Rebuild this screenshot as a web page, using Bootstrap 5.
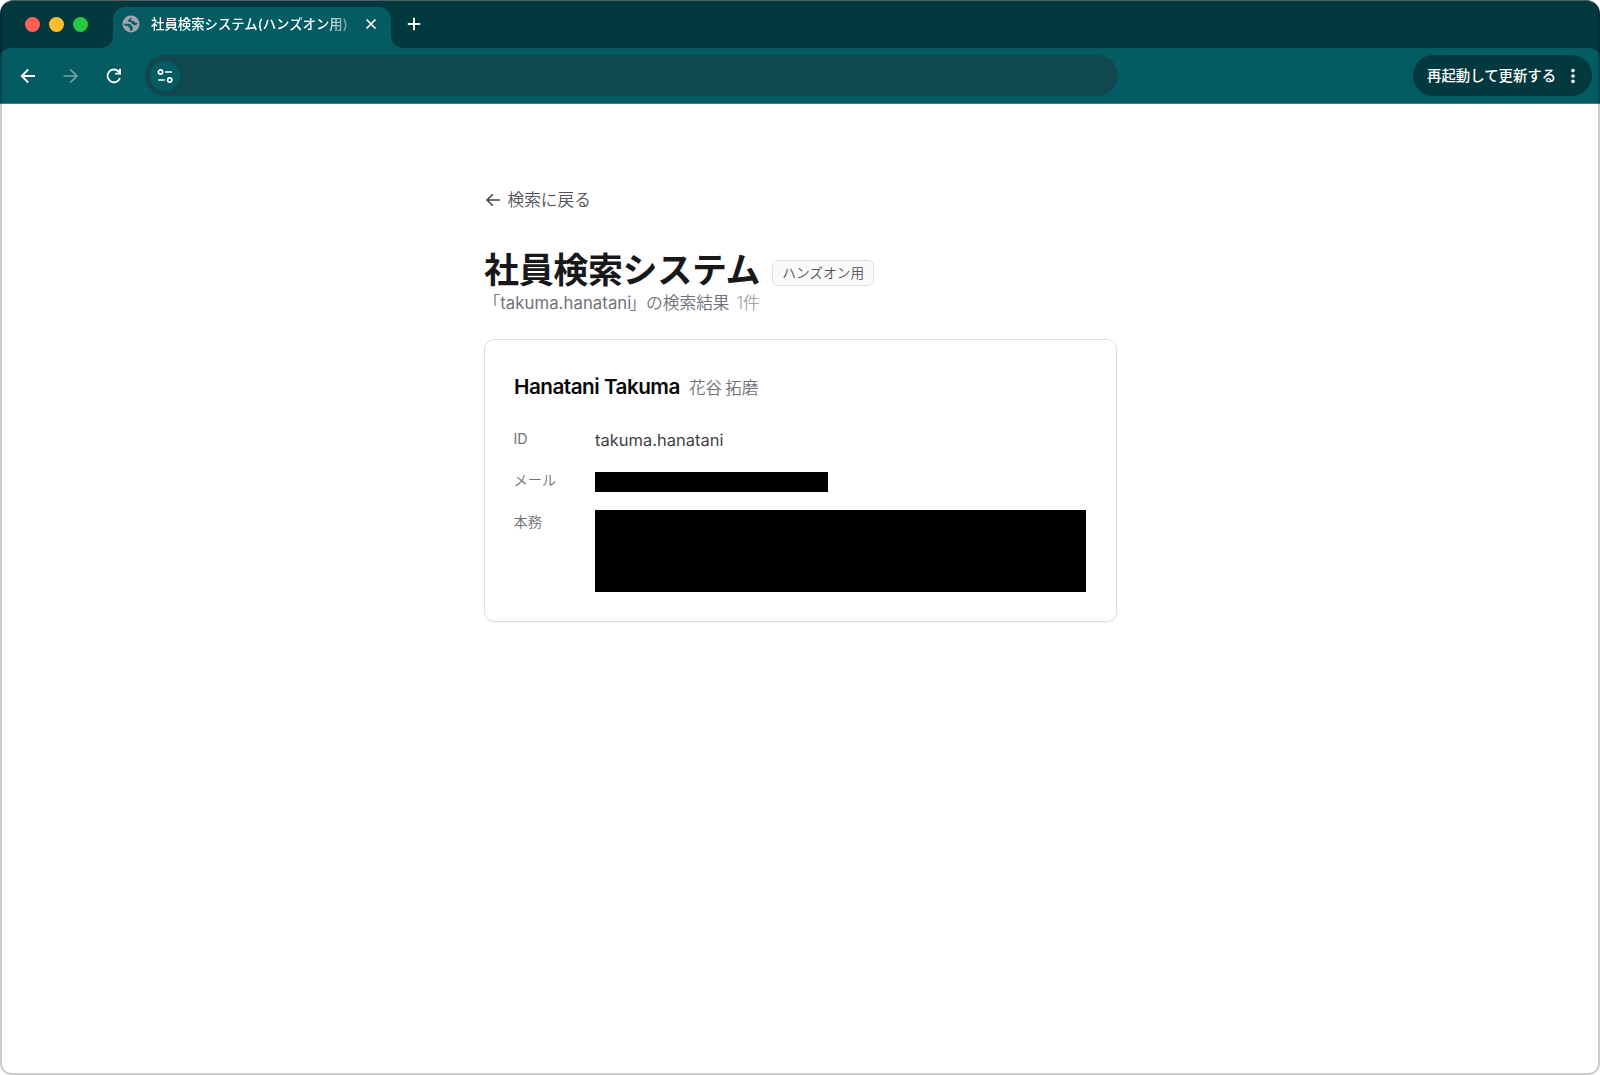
<!DOCTYPE html>
<html lang="ja">
<head>
<meta charset="utf-8">
<meta name="viewport" content="width=device-width, initial-scale=1">
<title>社員検索システム(ハンズオン用)</title>
<link href="https://cdn.jsdelivr.net/npm/bootstrap@5.3.0/dist/css/bootstrap.min.css" rel="stylesheet">
<style>
body{font-family:Inter,"Noto Sans CJK JP",sans-serif;background:#fff;overflow:hidden}
svg{display:block;flex:none}
.win{width:1600px;height:1075px;border-radius:14px 14px 11px 11px;background:#fff}
.win::after{content:"";position:absolute;inset:0;border:2px solid rgba(0,0,0,.2);border-top:1px solid rgba(110,110,110,.75);border-radius:inherit;pointer-events:none}
.strip{height:48px;background:#02393e;padding:7px 0 0 24.5px}
.lights{gap:9px;width:88px;height:34px}
.dot{width:15px;height:15px;border-radius:50%}
.dot-r{background:#ff5f57}.dot-y{background:#febc2e}.dot-g{background:#28c840}
.tab-active{width:278.5px;height:41px;background:#045b61;border-radius:12px 12px 0 0;padding:0 12px 8px 9.5px;color:#fff}
.tab-active::before,.tab-active::after{content:"";position:absolute;bottom:0;width:12px;height:12px}
.tab-active::before{left:-12px;background:radial-gradient(circle at 0 0,transparent 11.5px,#045b61 12.2px)}
.tab-active::after{right:-12px;background:radial-gradient(circle at 100% 0,transparent 11.5px,#045b61 12.2px)}
.tab-title{width:199px;margin-left:11px;font:500 13.4px/20px Inter,"Noto Sans CJK JP",sans-serif;-webkit-mask-image:linear-gradient(90deg,#000 172px,rgba(0,0,0,.4) 196px)}
.plus{margin:10px 0 0 16px}
.bars{background:#02393e}
.toolbar{height:56px;background:#045b61;border-radius:11px 11px 0 0;border-bottom:1px solid #3c7f84;padding:0 8px 0 17px;color:#fff}
.fwd,.reload{margin-left:21px}
.addr{width:973px;height:41px;border-radius:21px;background:#10484f;padding-left:5px;margin-left:20px}
.tune{width:30px;height:30px;border-radius:50%;background:#045b61}
.update{width:179px;height:41px;border-radius:21px;background:#02393e;padding:0 15.5px 0 14px;font-size:14.4px}
.page{width:633px;padding-top:84px;color:#18181b}
.back{height:24px;font-size:16.7px;line-height:24px;font-weight:350;color:#52525b;gap:7px}
.heading{margin-top:36px}
.ttl{font-size:35px;line-height:42px;letter-spacing:-.35px;font-weight:700;color:#18181b;padding-left:.5px;padding-top:1px;margin-bottom:-1px}
.tagbox{width:102px;height:26px;border:1px solid #e0e0e3;border-radius:6px;background:#fafafa;font-size:13.7px;font-weight:350;color:#52525b;margin:8px 0 0 12px}
.sub{font-size:16.7px;line-height:24px;color:#71717a;margin-top:1px;font-weight:350}
.sub .latin{font-weight:400;letter-spacing:.08px;margin-right:-2px}
.cnt{color:#a1a1aa;margin-left:7px}
.result{width:633px;height:283px;margin-top:24px;border:1.5px solid #dfdfe2;border-radius:10px;padding:31px 29px 29px;box-shadow:0 1px 2px rgba(0,0,0,.05)}
.name{font-size:20.7px;line-height:30px;font-weight:600;letter-spacing:-.5px;color:#09090b;padding-left:.5px}
.kanji{font-size:16.6px;line-height:32px;padding-top:1px;margin-bottom:-1px;font-weight:350;word-spacing:-1.5px;color:#71717a;margin-left:9px}
.key{width:81px;font-size:14.2px;line-height:20px;font-weight:350;color:#71717a}
.key.latin{font-weight:400}
.val{font-size:16.5px;line-height:24px;color:#3f3f46;margin:-1px 0 1px .5px}
.row-id{margin-top:26px;height:24px}.row-mail{margin-top:17px}.row-post{margin-top:18px}
.row-post .key{padding-top:2px}
.mask-s{width:233px;height:20px;background:#000;margin-top:2px}
.mask-l{width:491.5px;height:82px;background:#000}
</style>
<script src="https://cdn.jsdelivr.net/npm/bootstrap@5.3.0/dist/js/bootstrap.bundle.min.js"></script>
</head>
<body>
<div class="win position-relative overflow-hidden d-flex flex-column">
  <div class="strip d-flex">
    <div class="lights d-flex align-items-center"><span class="dot dot-r"></span><span class="dot dot-y"></span><span class="dot dot-g"></span></div>
    <div class="tab-active position-relative d-flex align-items-center">
      <svg width="18" height="18" viewBox="0 0 18 18"><circle cx="9" cy="9" r="8.5" fill="#a0a5ad"/><path d="M10 2.2L6.2 5Q5.6 7 7.6 7H9.2Q9.4 9 11 9.600L13 10.200Q15.800 10 15.700 8.300L13.200 7.800Q12.600 6.200 11 6L9 5.500ZM2.300 8.800H6.500Q9.600 9.100 9.600 11.300L11 12.200Q11 14.500 9.600 15.700L8 15.700V12.800Q6.200 12.600 6.200 10.800H2.500Z" fill="#045b61"/></svg>
      <div class="tab-title text-nowrap overflow-hidden">社員検索システム(ハンズオン用)</div>
      <svg class="ms-auto" width="16" height="16" viewBox="0 0 16 16"><path d="M3.500 3.500l9 9M12.500 3.500l-9 9" stroke="#fff" stroke-width="1.700"/></svg>
    </div>
    <svg class="plus" width="14" height="14" viewBox="0 0 14 14"><path d="M7 .8v12.400M.8 7h12.400" stroke="#fff" stroke-width="1.800"/></svg>
  </div>
  <div class="bars">
    <div class="toolbar d-flex align-items-center">
      <svg width="22" height="22" viewBox="0 0 22 22"><path d="M18 11H5M11.200 4.500L4.700 11l6.500 6.500" fill="none" stroke="#fff" stroke-width="1.800"/></svg>
      <svg class="fwd" width="22" height="22" viewBox="0 0 22 22"><path d="M3.500 11h13M10.400 4.500l6.500 6.500-6.500 6.500" fill="none" stroke="#75a5a8" stroke-width="1.700"/></svg>
      <svg class="reload" width="22" height="22" viewBox="0 0 22 22"><path d="M17 13a6.400 6.400 0 1 1-1.300-6.400l1.300 1.500" fill="none" stroke="#fff" stroke-width="1.800"/><path d="M18 3.800v5.700h-5.900V7.700h4V3.800z" fill="#fff"/></svg>
      <div class="addr d-flex align-items-center">
        <div class="tune d-flex align-items-center justify-content-center"><svg width="16" height="16" viewBox="0 0 16 16" fill="none" stroke="#fff" stroke-width="1.700"><circle cx="3.500" cy="4" r="2.100"/><path d="M8 4h7M1.200 12h6.600"/><circle cx="12.700" cy="12" r="2.100"/></svg></div>
      </div>
      <div class="update ms-auto d-flex align-items-center justify-content-between text-nowrap fw-medium"><span>再起動して更新する</span><svg width="8" height="16" viewBox="0 0 8 16" fill="#fff"><circle cx="4" cy="2.600" r="1.800"/><circle cx="4" cy="8" r="1.800"/><circle cx="4" cy="13.400" r="1.800"/></svg></div>
    </div>
  </div>
  <main class="page mx-auto">
    <div class="back d-flex align-items-center"><svg width="17" height="16" viewBox="0 0 17 16"><path d="M15.800 8H3.300M8.800 2.200L3 8l5.800 5.800" fill="none" stroke="#3f3f46" stroke-width="1.500"/></svg><span>検索に戻る</span></div>
    <div class="heading d-flex align-items-center">
      <h1 class="ttl">社員検索システム</h1>
      <span class="tagbox d-flex align-items-center justify-content-center">ハンズオン用</span>
    </div>
    <p class="sub mb-0">「<span class="latin">takuma.hanatani</span>」の検索結果<span class="cnt">1件</span></p>
    <section class="result">
      <div class="d-flex align-items-center"><h2 class="name mb-0">Hanatani Takuma</h2><span class="kanji">花谷 拓磨</span></div>
      <div class="row-id d-flex"><div class="key latin">ID</div><div class="val">takuma.hanatani</div></div>
      <div class="row-mail d-flex"><div class="key">メール</div><div class="mask-s"></div></div>
      <div class="row-post d-flex"><div class="key">本務</div><div class="mask-l"></div></div>
    </section>
  </main>
</div>
</body>
</html>
